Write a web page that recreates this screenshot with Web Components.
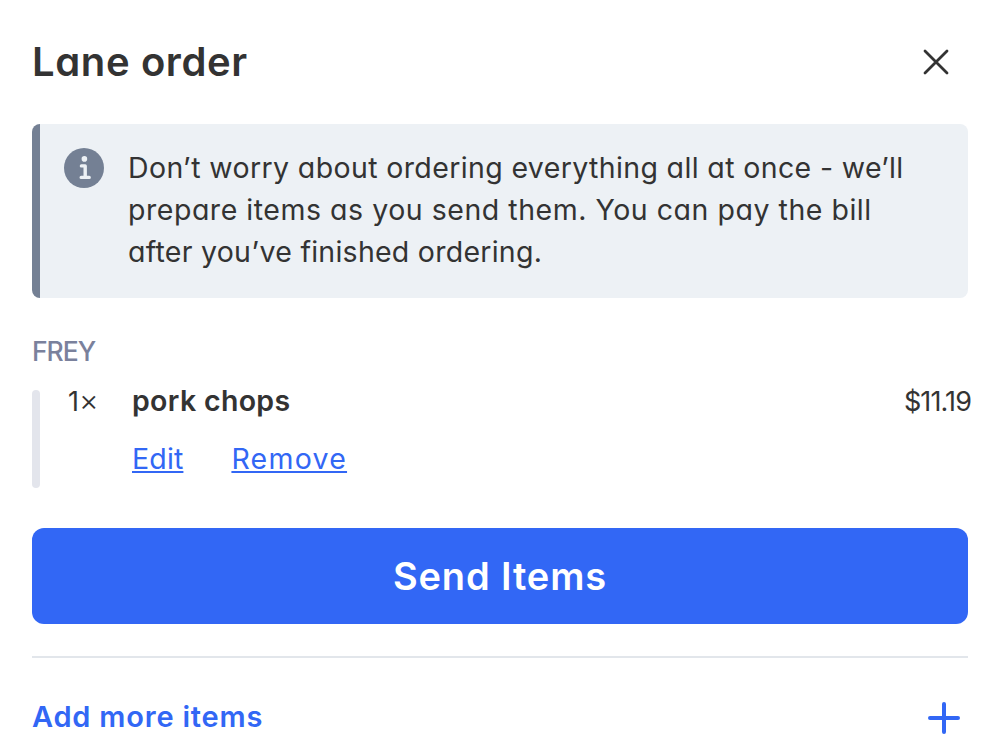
<!DOCTYPE html>
<html lang="en">
<head>
<meta charset="utf-8">
<title>Lane order</title>
<style>
html,body{margin:0;background:#fff}
body{width:998px;height:756px;overflow:hidden;font-family:Inter,"Noto Sans",sans-serif;font-feature-settings:"cv11";color:#333}
</style>
</head>
<body>
<order-panel></order-panel>
<script>
const define = (name, html) => customElements.define(name, class extends HTMLElement {
  constructor() {
    super();
    this.attachShadow({ mode: "open" }).innerHTML = html;
  }
});

define("panel-header", `
<style>
:host{display:flex;justify-content:space-between;align-items:center;height:60px;padding:32px 16px 32px 0}
h1{margin:0;font-size:40px;font-weight:600;line-height:60px;letter-spacing:.62px;white-space:nowrap}
svg{display:block}
</style>
<h1><slot></slot></h1>
<svg width="32" height="32" viewBox="0 0 32 32" fill="none" stroke="#333" stroke-width="2.8" stroke-linecap="round"><path d="M5 5 27 27M27 5 5 27"/></svg>`);

define("info-note", `
<style>
:host{display:flex;gap:24px;box-sizing:border-box;height:174px;padding:24px;border-left:8px solid #748094;border-radius:8px;background:#edf1f5}
svg{display:block;flex:none}
.text{margin-top:-1px;font-size:28.5px;line-height:42px;white-space:nowrap}
</style>
<svg width="40" height="40" viewBox="0 0 40 40"><circle cx="20" cy="20" r="20" fill="#748094"/><circle cx="20.4" cy="10.9" r="2.8" fill="#edf1f5"/><path d="M17.4 17.9h3.8v11.3M17.2 29.4h8" fill="none" stroke="#edf1f5" stroke-width="3.4" stroke-linecap="round" stroke-linejoin="round"/></svg>
<div class="text"><slot></slot></div>`);

define("guest-name", `
<style>
:host{display:block;margin:33px 0 19px;font-size:26.5px;font-weight:500;line-height:40px;letter-spacing:-1px;color:#7a819c}
</style>
<slot></slot>`);

define("text-link", `
<style>
:host{display:block}
a{color:#3267f5;text-decoration:underline;text-decoration-thickness:2px;text-underline-offset:2px;text-decoration-skip-ink:none}
</style>
<a><slot></slot></a>`);

define("order-item", `
<style>
:host{display:flex;height:98px;margin-right:-3px}
.bar{width:8px;border-radius:4px;background:#e3e5ec}
.qty{box-sizing:border-box;width:92px;padding-left:28px;font-size:27px;line-height:24px;white-space:nowrap}
.body{flex:1}
.name{font-size:28.5px;font-weight:600;line-height:22px;letter-spacing:.33px}
.actions{display:flex;gap:48px;margin-top:27px;font-size:28.5px;line-height:40px}
.price{font-size:27px;line-height:24px;letter-spacing:-.9px}
</style>
<div class="bar"></div>
<div class="qty"><slot name="qty"></slot></div>
<div class="body"><div class="name"><slot></slot></div><div class="actions"><slot name="action"></slot></div></div>
<div class="price"><slot name="price"></slot></div>`);

define("primary-button", `
<style>
:host{display:block;margin-top:40px}
button{display:block;width:100%;height:96px;padding:0;border:0;border-radius:12px;background:#3267f5;color:#fff;font:600 38px/96px Inter,sans-serif;letter-spacing:.87px}
</style>
<button><slot></slot></button>`);

define("add-row", `
<style>
:host{display:flex;justify-content:space-between;align-items:center;margin-top:32px;padding:29px 8px 0 0;border-top:2px solid #e2e6eb;color:#3267f5;font-size:29px;font-weight:600;line-height:60px;letter-spacing:.8px}
svg{display:block;margin-top:2px}
</style>
<span><slot></slot></span>
<svg width="32" height="32" viewBox="0 0 32 32" fill="none" stroke="#3267f5" stroke-width="4" stroke-linecap="round"><path d="M16 2V30M2 16H30"/></svg>`);

define("order-panel", `
<style>
:host{display:block;padding:0 30px 0 32px}
.a{letter-spacing:.37px}.b{letter-spacing:.53px}.c{letter-spacing:.25px}
.edit{letter-spacing:.15px}.remove{letter-spacing:1.25px}
.times{font-weight:300;font-size:30px;line-height:1px}
</style>
<panel-header>Lane order</panel-header>
<info-note><span class="a">Don’t worry about ordering everything all at once - we’ll</span><br><span class="b">prepare items as you send them. You can pay the bill</span><br><span class="c">after you’ve finished ordering.</span></info-note>
<guest-name>FREY</guest-name>
<order-item>
<span slot="qty">1<span class="times">×</span></span>pork chops
<text-link slot="action" class="edit">Edit</text-link>
<text-link slot="action" class="remove">Remove</text-link>
<span slot="price">$11.19</span>
</order-item>
<primary-button>Send Items</primary-button>
<add-row>Add more items</add-row>`);
</script>
</body>
</html>
